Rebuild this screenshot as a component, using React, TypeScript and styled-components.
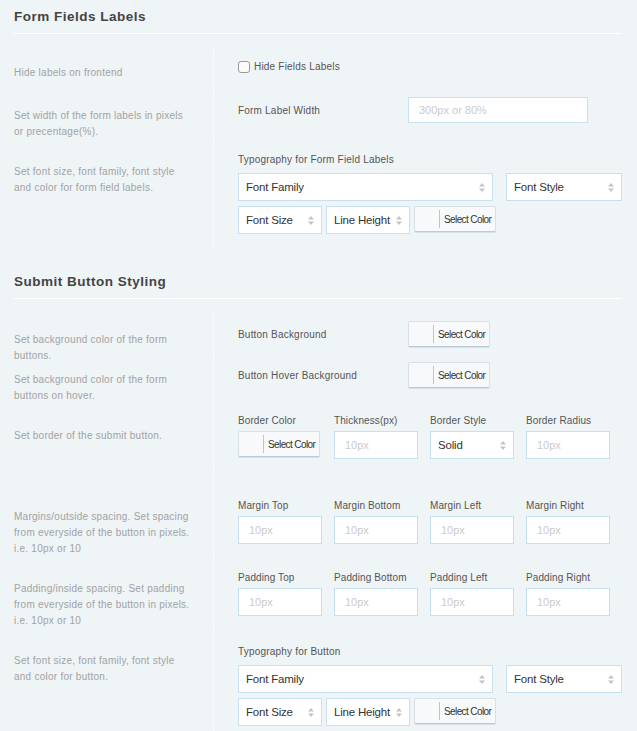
import React from 'react';
import styled, { createGlobalStyle } from 'styled-components';

const GlobalStyle = createGlobalStyle`
  body {
    margin: 0;
    background: #eff4f7;
    font-family: "Liberation Sans", Arial, sans-serif;
  }
`;

const Page = styled.div`
  padding: 0 15px 0 14px;
  min-height: 731px;
`;

const Section = styled.section<{ $gap?: number }>`
  margin-top: ${p => p.$gap ?? 0}px;
`;

const SectionTitle = styled.h2`
  margin: 0;
  padding: 9px 0 8px;
  font-size: 13.5px;
  line-height: 16px;
  font-weight: bold;
  letter-spacing: 0.5px;
  color: #444;
  border-bottom: 1px solid #fff;
`;

const Rows = styled.div`
  padding-top: 14px;
`;

const Row = styled.div<{ $h: number }>`
  display: grid;
  grid-template-columns: 199px 1fr;
  height: ${p => p.$h}px;
`;

const Desc = styled.div<{ $top: number }>`
  padding-top: ${p => p.$top}px;
  font-size: 10px;
  line-height: 16px;
  letter-spacing: 0.25px;
  color: #a2a2a2;
`;

const Field = styled.div<{ $top: number }>`
  border-left: 1px dotted #fff;
  padding: ${p => p.$top}px 0 0 24px;
`;

const Inline = styled.div`
  display: flex;
  align-items: center;
`;

const InlineLabel = styled.span`
  width: 170px;
  font-size: 10px;
  letter-spacing: 0.2px;
  color: #555;
`;

const CheckLabel = styled.label`
  display: flex;
  align-items: center;
  gap: 4px;
  font-size: 10px;
  line-height: 14px;
  letter-spacing: 0.2px;
  color: #555;
`;

const Check = styled.span`
  box-sizing: border-box;
  width: 12px;
  height: 12px;
  border: 1px solid #9a9a9a;
  border-radius: 3px;
  background: #fbfbfb;
`;

const GroupLabel = styled.div`
  font-size: 10px;
  line-height: 16px;
  letter-spacing: 0.2px;
  color: #555;
  margin-bottom: 5px;
`;

const SmallLabel = styled.div`
  font-size: 10px;
  line-height: 14px;
  letter-spacing: 0.1px;
  color: #555;
  margin-bottom: 3px;
`;

const TypoTop = styled.div`
  display: grid;
  grid-template-columns: 1fr 116px;
  column-gap: 13px;
  margin-bottom: 5px;
`;

const TypoBottom = styled.div`
  display: flex;
  gap: 4px;
  align-items: flex-start;
`;

const Quad = styled.div`
  display: grid;
  grid-template-columns: repeat(4, 84px);
  column-gap: 12px;
`;

const TextInput = styled.input<{ $w?: number; $h?: number }>`
  box-sizing: border-box;
  width: ${p => p.$w ?? 84}px;
  height: ${p => p.$h ?? 28}px;
  margin: 0;
  padding: 0 10px;
  border: 1px solid #c7e1ee;
  background: #fff;
  font-family: "Liberation Sans", Arial, sans-serif;
  font-size: 11px;
  color: #333;
  outline: none;
  &::placeholder {
    color: #cbcbcb;
  }
`;

const SelectBox = styled.div<{ $w?: number }>`
  box-sizing: border-box;
  width: ${p => (p.$w ? `${p.$w}px` : '100%')};
  height: 28px;
  display: flex;
  align-items: center;
  justify-content: space-between;
  padding: 0 7px;
  border: 1px solid #c7e1ee;
  background: #fff;
  font-size: 11.5px;
  letter-spacing: -0.2px;
  color: #333;
`;

const ColorButton = styled.div`
  box-sizing: border-box;
  width: 82px;
  height: 26px;
  display: flex;
  align-items: center;
  border: 1px solid #d6e0e6;
  border-bottom-color: #b9cbd6;
  border-radius: 2px;
  background: #f7f9fa;
  box-shadow: 0 1px 0 #d5e1e8;
`;

const Swatch = styled.span`
  width: 24px;
  height: 18px;
  border-right: 1px solid #c4c4c4;
`;

const PickerText = styled.span`
  margin-left: 4px;
  font-size: 10px;
  letter-spacing: -0.6px;
  color: #333;
`;

function Arrows() {
  return (
    <svg width="6" height="9" viewBox="0 0 6 9">
      <path d="M3 0 L6 3.5 H0 Z M0 5.5 H6 L3 9 Z" fill="#c4c4c4" />
    </svg>
  );
}

function Select({ text, w }: { text: string; w?: number }) {
  return (
    <SelectBox $w={w}>
      <span>{text}</span>
      <Arrows />
    </SelectBox>
  );
}

function Picker() {
  return (
    <ColorButton>
      <Swatch />
      <PickerText>Select Color</PickerText>
    </ColorButton>
  );
}

function Typography({ title }: { title: string }) {
  return (
    <>
      <GroupLabel>{title}</GroupLabel>
      <TypoTop>
        <Select text="Font Family" />
        <Select text="Font Style" />
      </TypoTop>
      <TypoBottom>
        <Select text="Font Size" w={84} />
        <Select text="Line Height" w={84} />
        <Picker />
      </TypoBottom>
    </>
  );
}

function Spacing({ kind }: { kind: string }) {
  return (
    <Quad>
      {['Top', 'Bottom', 'Left', 'Right'].map(side => (
        <div key={side}>
          <SmallLabel>{kind} {side}</SmallLabel>
          <TextInput placeholder="10px" />
        </div>
      ))}
    </Quad>
  );
}

export default function App() {
  return (
    <Page>
      <GlobalStyle />
      <Section>
        <SectionTitle>Form Fields Labels</SectionTitle>
        <Rows>
          <Row $h={42}>
            <Desc $top={17}>Hide labels on frontend</Desc>
            <Field $top={12}>
              <CheckLabel>
                <Check />
                Hide Fields Labels
              </CheckLabel>
            </Field>
          </Row>
          <Row $h={52}>
            <Desc $top={18}>
              Set width of the form labels in pixels<br />or precentage(%).
            </Desc>
            <Field $top={7}>
              <Inline>
                <InlineLabel>Form Label Width</InlineLabel>
                <TextInput $w={180} $h={26} placeholder="300px or 80%" />
              </Inline>
            </Field>
          </Row>
          <Row $h={110}>
            <Desc $top={22}>
              Set font size, font family, font style<br />and color for form field labels.
            </Desc>
            <Field $top={10}>
              <Typography title="Typography for Form Field Labels" />
            </Field>
          </Row>
        </Rows>
      </Section>

      <Section $gap={13}>
        <SectionTitle>Submit Button Styling</SectionTitle>
        <Rows>
          <Row $h={41}>
            <Desc $top={19}>
              Set background color of the form<br />buttons.
            </Desc>
            <Field $top={8}>
              <Inline>
                <InlineLabel>Button Background</InlineLabel>
                <Picker />
              </Inline>
            </Field>
          </Row>
          <Row $h={52}>
            <Desc $top={18}>
              Set background color of the form<br />buttons on hover.
            </Desc>
            <Field $top={8}>
              <Inline>
                <InlineLabel>Button Hover Background</InlineLabel>
                <Picker />
              </Inline>
            </Field>
          </Row>
          <Row $h={65}>
            <Desc $top={22}>Set border of the submit button.</Desc>
            <Field $top={8}>
              <Quad>
                <div>
                  <SmallLabel>Border Color</SmallLabel>
                  <Picker />
                </div>
                <div>
                  <SmallLabel>Thickness(px)</SmallLabel>
                  <TextInput placeholder="10px" />
                </div>
                <div>
                  <SmallLabel>Border Style</SmallLabel>
                  <Select text="Solid" w={84} />
                </div>
                <div>
                  <SmallLabel>Border Radius</SmallLabel>
                  <TextInput placeholder="10px" />
                </div>
              </Quad>
            </Field>
          </Row>
          <Row $h={86}>
            <Desc $top={38}>
              Margins/outside spacing. Set spacing<br />from everyside of the button in pixels.<br />i.e. 10px or 10
            </Desc>
            <Field $top={28}>
              <Spacing kind="Margin" />
            </Field>
          </Row>
          <Row $h={72}>
            <Desc $top={24}>
              Padding/inside spacing. Set padding<br />from everyside of the button in pixels.<br />i.e. 10px or 10
            </Desc>
            <Field $top={14}>
              <Spacing kind="Padding" />
            </Field>
          </Row>
          <Row $h={110}>
            <Desc $top={24}>
              Set font size, font family, font style<br />and color for button.
            </Desc>
            <Field $top={15}>
              <Typography title="Typography for Button" />
            </Field>
          </Row>
        </Rows>
      </Section>
    </Page>
  );
}
